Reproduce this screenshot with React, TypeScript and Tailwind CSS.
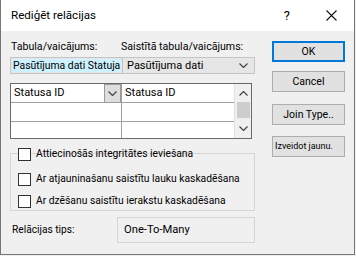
import React from "react";

function Chevron({ up = false }: { up?: boolean }) {
  return (
    <svg width="9" height="5" viewBox="0 0 9 5">
      <path
        d={up ? "M0.5 4.5 L4.5 0.5 L8.5 4.5" : "M0.5 0.5 L4.5 4.5 L8.5 0.5"}
        fill="none"
        stroke="#444"
        strokeWidth="1.2"
      />
    </svg>
  );
}

function Check({ label, className = "" }: { label: string; className?: string }) {
  return (
    <div className={"flex items-center h-[16px] " + className}>
      <div className="ml-[7px] w-[13px] h-[13px] border border-[#333] bg-white shrink-0" />
      <span className="ml-[5px] text-[10.3px] leading-[16px] whitespace-nowrap">{label}</span>
    </div>
  );
}

function Btn({ children, ok = false, small = false }: { children: React.ReactNode; ok?: boolean; small?: boolean }) {
  return (
    <div
      className={
        "w-[73px] h-[21px] flex items-center bg-[#e1e1e1] whitespace-nowrap " +
        (ok ? "border-2 border-[#0078d7] " : "border border-[#adadad] ") +
        (small ? "justify-start pl-[2px] text-[9px]" : "justify-center text-[10.5px]")
      }
    >
      {children}
    </div>
  );
}

export default function App() {
  return (
    <div className="w-[356px] h-[256px] bg-[#f0f0f0] font-['Roboto',sans-serif] text-[12px] text-black">
      <div className="w-[355px] h-[255px] border-l border-r border-b border-[#777] flex flex-col">
        <div className="h-[31px] bg-white flex items-center shrink-0">
          <span className="ml-[10px] text-[11.6px]">Rediģēt relācijas</span>
          <span className="ml-auto text-[13px]">?</span>
          <svg width="11" height="11" viewBox="0 0 11 11" className="ml-[36px] mr-[17px]">
            <path d="M0.5 0.5 L10.5 10.5 M10.5 0.5 L0.5 10.5" stroke="#111" strokeWidth="1.1" />
          </svg>
        </div>
        <div className="flex flex-1">
          <div className="ml-[9px] w-[246px] flex flex-col">
            <div className="flex mt-[8px] h-[16px] items-center text-[10.6px]">
              <span className="w-[111px] pl-[1px]">Tabula/vaicājums:</span>
              <span>Saistītā tabula/vaicājums:</span>
            </div>
            <div className="flex mt-[2px] h-[17px]">
              <div className="w-[113px] h-full border border-[#c4c4c4] bg-[#e6e6e6] flex items-center px-[1px]">
                <span className="bg-[#cdf1ff] w-full h-[13px] leading-[13px] text-[10.4px] whitespace-nowrap overflow-hidden pl-[1px]">
                  Pasūtījuma dati Statuja
                </span>
              </div>
              <div className="w-[132px] h-full border border-l-0 border-[#c4c4c4] bg-[#e6e6e6] flex items-center pl-[4px] pr-[6px]">
                <span className="text-[11px] leading-[15px]">Pasūtījuma dati</span>
                <span className="ml-auto flex"><Chevron /></span>
              </div>
            </div>
            <div className="mt-[9px] w-[242px] h-[56px] border border-[#6a6a6a] bg-white flex">
              <div className="flex flex-col w-[223px]">
                <div className="flex h-[19px] border-b border-[#a0a0a0]">
                  <div className="w-[111px] border-r border-[#a0a0a0] flex items-center">
                    <span className="pl-[3px] text-[11px]">Statusa ID</span>
                    <div className="ml-auto w-[17px] h-[19px] bg-[#dedede] border border-[#9a9a9a] flex items-center justify-center">
                      <Chevron />
                    </div>
                  </div>
                  <div className="flex-1 flex items-center">
                    <span className="pl-[3px] text-[11px]">Statusa ID</span>
                  </div>
                </div>
                <div className="flex h-[19px] border-b border-[#a0a0a0]">
                  <div className="w-[111px] border-r border-[#a0a0a0]" />
                  <div className="flex-1" />
                </div>
                <div className="flex flex-1">
                  <div className="w-[111px] border-r border-[#a0a0a0]" />
                  <div className="flex-1" />
                </div>
              </div>
              <div className="w-[17px] bg-[#f0f0f0] border-l border-[#e0e0e0] flex flex-col items-center">
                <div className="h-[18px] flex items-center justify-center"><Chevron up /></div>
                <div className="w-[13px] h-[16px] bg-[#cdcdcd]" />
                <div className="flex-1 flex items-center justify-center"><Chevron /></div>
              </div>
            </div>
            <div className="mt-[14px] w-[245px] h-[58px] border border-[#d5d5d5] flex flex-col">
              <Check label="Attiecinošās integritātes ieviešana" className="-mt-[8px]" />
              <Check label="Ar atjauninašanu saistītu lauku kaskadēšana" className="mt-[9px]" />
              <Check label="Ar dzēšanu saistītu ierakstu kaskadēšana" className="mt-[6px]" />
            </div>
            <div className="mt-[6px] flex items-center">
              <span className="w-[107px] pl-[2px] text-[10.2px]">Relācijas tips:</span>
              <div className="w-[138px] h-[26px] border border-[#d5d5d5] flex items-center pl-[6px] text-[11.2px]">
                One-To-Many
              </div>
            </div>
          </div>
          <div className="ml-[16px] mt-[10px] flex flex-col">
            <Btn ok>OK</Btn>
            <div className="mt-[9px]"><Btn>Cancel</Btn></div>
            <div className="mt-[12px]"><Btn>Join Type..</Btn></div>
            <div className="mt-[11px]"><Btn small>Izveidot jaunu.</Btn></div>
          </div>
        </div>
      </div>
    </div>
  );
}
